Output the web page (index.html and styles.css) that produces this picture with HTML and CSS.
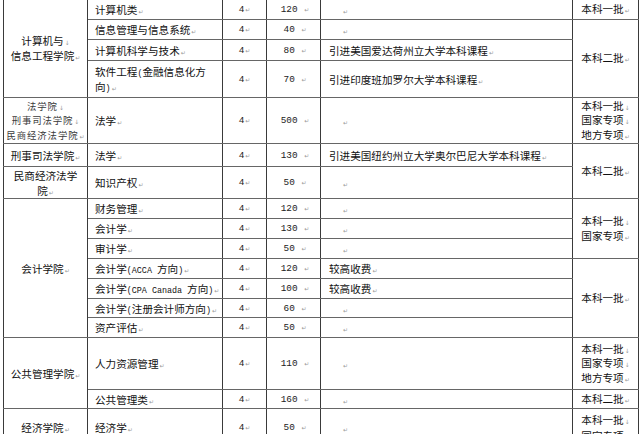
FILE: index.html
```html
<!DOCTYPE html>
<html lang="zh">
<head>
<meta charset="utf-8">
<link rel="stylesheet" href="styles.css">
</head>
<body>
<table class="grid">
  <colgroup>
    <col class="c-college"><col class="c-major"><col class="c-years"><col class="c-count"><col class="c-note"><col class="c-batch">
  </colgroup>
  <tbody>
    <tr class="r21">
      <td class="college" rowspan="4">计算机与<span class="br">↓</span><br>信息工程学院<span class="pm">↵</span></td>
      <td class="major">计算机类<span class="pm">↵</span></td>
      <td class="years">4<span class="pm">↵</span></td>
      <td class="num">120 <span class="pm">↵</span></td>
      <td class="note empty"><span class="pm">↵</span></td>
      <td class="batch">本科一批<span class="pm">↵</span></td>
    </tr>
    <tr class="r20">
      <td class="major">信息管理与信息系统<span class="pm">↵</span></td>
      <td class="years">4<span class="pm">↵</span></td>
      <td class="num">40 <span class="pm">↵</span></td>
      <td class="note empty"><span class="pm">↵</span></td>
      <td class="batch" rowspan="3">本科二批<span class="pm">↵</span></td>
    </tr>
    <tr class="r21">
      <td class="major">计算机科学与技术<span class="pm">↵</span></td>
      <td class="years">4<span class="pm">↵</span></td>
      <td class="num">80 <span class="pm">↵</span></td>
      <td class="note">引进美国爱达荷州立大学本科课程<span class="pm">↵</span></td>
    </tr>
    <tr class="r37">
      <td class="major">软件工程<span class="lat">(</span>金融信息化方<br>向<span class="lat">)</span><span class="pm">↵</span></td>
      <td class="years">4<span class="pm">↵</span></td>
      <td class="num">70 <span class="pm">↵</span></td>
      <td class="note">引进印度班加罗尔大学本科课程<span class="pm">↵</span></td>
    </tr>
    <tr class="r46">
      <td class="college small">法学院<span class="br">↓</span><br>刑事司法学院<span class="br">↓</span><br>民商经济法学院<span class="pm">↵</span></td>
      <td class="major">法学<span class="pm">↵</span></td>
      <td class="years">4<span class="pm">↵</span></td>
      <td class="num">500 <span class="pm">↵</span></td>
      <td class="note empty"><span class="pm">↵</span></td>
      <td class="batch">本科一批<span class="br">↓</span><br>国家专项<span class="br">↓</span><br>地方专项<span class="pm">↵</span></td>
    </tr>
    <tr class="r23">
      <td class="college">刑事司法学院<span class="pm">↵</span></td>
      <td class="major">法学<span class="pm">↵</span></td>
      <td class="years">4<span class="pm">↵</span></td>
      <td class="num">130 <span class="pm">↵</span></td>
      <td class="note">引进美国纽约州立大学奥尔巴尼大学本科课程<span class="pm">↵</span></td>
      <td class="batch" rowspan="2">本科二批<span class="pm">↵</span></td>
    </tr>
    <tr class="r32">
      <td class="college">民商经济法学<br>院<span class="pm">↵</span></td>
      <td class="major">知识产权<span class="pm">↵</span></td>
      <td class="years">4<span class="pm">↵</span></td>
      <td class="num">50 <span class="pm">↵</span></td>
      <td class="note empty"><span class="pm">↵</span></td>
    </tr>
    <tr class="r20">
      <td class="college" rowspan="7">会计学院<span class="pm">↵</span></td>
      <td class="major">财务管理<span class="pm">↵</span></td>
      <td class="years">4<span class="pm">↵</span></td>
      <td class="num">120 <span class="pm">↵</span></td>
      <td class="note empty"><span class="pm">↵</span></td>
      <td class="batch" rowspan="3">本科一批<span class="br">↓</span><br>国家专项<span class="pm">↵</span></td>
    </tr>
    <tr class="r20">
      <td class="major">会计学<span class="pm">↵</span></td>
      <td class="years">4<span class="pm">↵</span></td>
      <td class="num">130 <span class="pm">↵</span></td>
      <td class="note empty"><span class="pm">↵</span></td>
    </tr>
    <tr class="r20">
      <td class="major">审计学<span class="pm">↵</span></td>
      <td class="years">4<span class="pm">↵</span></td>
      <td class="num">50 <span class="pm">↵</span></td>
      <td class="note empty"><span class="pm">↵</span></td>
    </tr>
    <tr class="r20">
      <td class="major">会计学<span class="lat">(ACCA </span>方向<span class="lat">)</span><span class="pm">↵</span></td>
      <td class="years">4<span class="pm">↵</span></td>
      <td class="num">120 <span class="pm">↵</span></td>
      <td class="note">较高收费<span class="pm">↵</span></td>
      <td class="batch" rowspan="4">本科一批<span class="pm">↵</span></td>
    </tr>
    <tr class="r20">
      <td class="major">会计学<span class="lat">(CPA Canada </span>方向<span class="lat">)</span><span class="pm">↵</span></td>
      <td class="years">4<span class="pm">↵</span></td>
      <td class="num">100 <span class="pm">↵</span></td>
      <td class="note">较高收费<span class="pm">↵</span></td>
    </tr>
    <tr class="r19">
      <td class="major">会计学<span class="lat">(</span>注册会计师方向<span class="lat">)</span><span class="pm">↵</span></td>
      <td class="years">4<span class="pm">↵</span></td>
      <td class="num">60 <span class="pm">↵</span></td>
      <td class="note empty"><span class="pm">↵</span></td>
    </tr>
    <tr class="r20">
      <td class="major">资产评估<span class="pm">↵</span></td>
      <td class="years">4<span class="pm">↵</span></td>
      <td class="num">50 <span class="pm">↵</span></td>
      <td class="note empty"><span class="pm">↵</span></td>
    </tr>
    <tr class="r52">
      <td class="college" rowspan="2">公共管理学院<span class="pm">↵</span></td>
      <td class="major">人力资源管理<span class="pm">↵</span></td>
      <td class="years">4<span class="pm">↵</span></td>
      <td class="num">110 <span class="pm">↵</span></td>
      <td class="note empty"><span class="pm">↵</span></td>
      <td class="batch">本科一批<span class="br">↓</span><br>国家专项<span class="br">↓</span><br>地方专项<span class="pm">↵</span></td>
    </tr>
    <tr class="r19">
      <td class="major">公共管理类<span class="pm">↵</span></td>
      <td class="years">4<span class="pm">↵</span></td>
      <td class="num">160 <span class="pm">↵</span></td>
      <td class="note empty"><span class="pm">↵</span></td>
      <td class="batch">本科二批<span class="pm">↵</span></td>
    </tr>
    <tr class="r38">
      <td class="college">经济学院<span class="pm">↵</span></td>
      <td class="major">经济学<span class="pm">↵</span></td>
      <td class="years">4<span class="pm">↵</span></td>
      <td class="num">50 <span class="pm">↵</span></td>
      <td class="note empty"><span class="pm">↵</span></td>
      <td class="batch wide">本科一批<span class="br">↓</span><br>国家专项<span class="pm">↵</span></td>
    </tr>
  </tbody>
</table>
</body>
</html>
```

FILE: styles.css
```css
html, body {
  margin: 0;
  padding: 0;
  background: #ffffff;
  overflow: hidden;
}

body {
  font-family: "Noto Sans CJK SC", sans-serif;
  color: #111111;
}

.grid {
  border-collapse: collapse;
  table-layout: fixed;
  width: 635px;
  margin: -2px 0 0 3px;
  font-size: 10.6px;
  line-height: 15px;
}

.c-college { width: 84px; }
.c-major { width: 135px; }
.c-years { width: 44px; }
.c-count { width: 54px; }
.c-note { width: 252px; }
.c-batch { width: 66px; }

.grid td {
  border-left: 1px solid #3a3a3a;
  border-right: 1px solid #3a3a3a;
  border-top: 1px solid #666666;
  border-bottom: 1px solid #666666;
  padding: 0;
  vertical-align: middle;
  white-space: nowrap;
  overflow: hidden;
}

.r19 { height: 19px; }
.r20 { height: 20px; }
.r21 { height: 21px; }
.r23 { height: 23px; }
.r32 { height: 32px; }
.r37 { height: 37px; }
.r38 { height: 38px; }
.r46 { height: 46px; }
.r52 { height: 52px; }

.college {
  text-align: center;
}

.college.small {
  font-size: 9.4px;
  letter-spacing: 0.9px;
  line-height: 14.5px;
  color: #3a3a3a;
}

.major {
  padding-left: 7px !important;
}

.years,
.num {
  text-align: center;
  font-family: "Liberation Mono", monospace;
  font-size: 9.4px;
  color: #222222;
}

.num {
  padding-left: 3px !important;
}

.note {
  padding-left: 8px !important;
}

.note.empty {
  padding-left: 21px !important;
}

.batch {
  text-align: center;
  line-height: 14.5px;
}

.batch.wide {
  line-height: 16px;
}

.lat {
  font-family: "Liberation Mono", monospace;
  font-size: 8.4px;
  line-height: 0;
}

.pm,
.br {
  font-family: "DejaVu Sans", sans-serif;
  font-size: 6px;
  line-height: 0;
  color: #9a9a9a;
  margin-left: 1px;
  letter-spacing: 0;
}
```
